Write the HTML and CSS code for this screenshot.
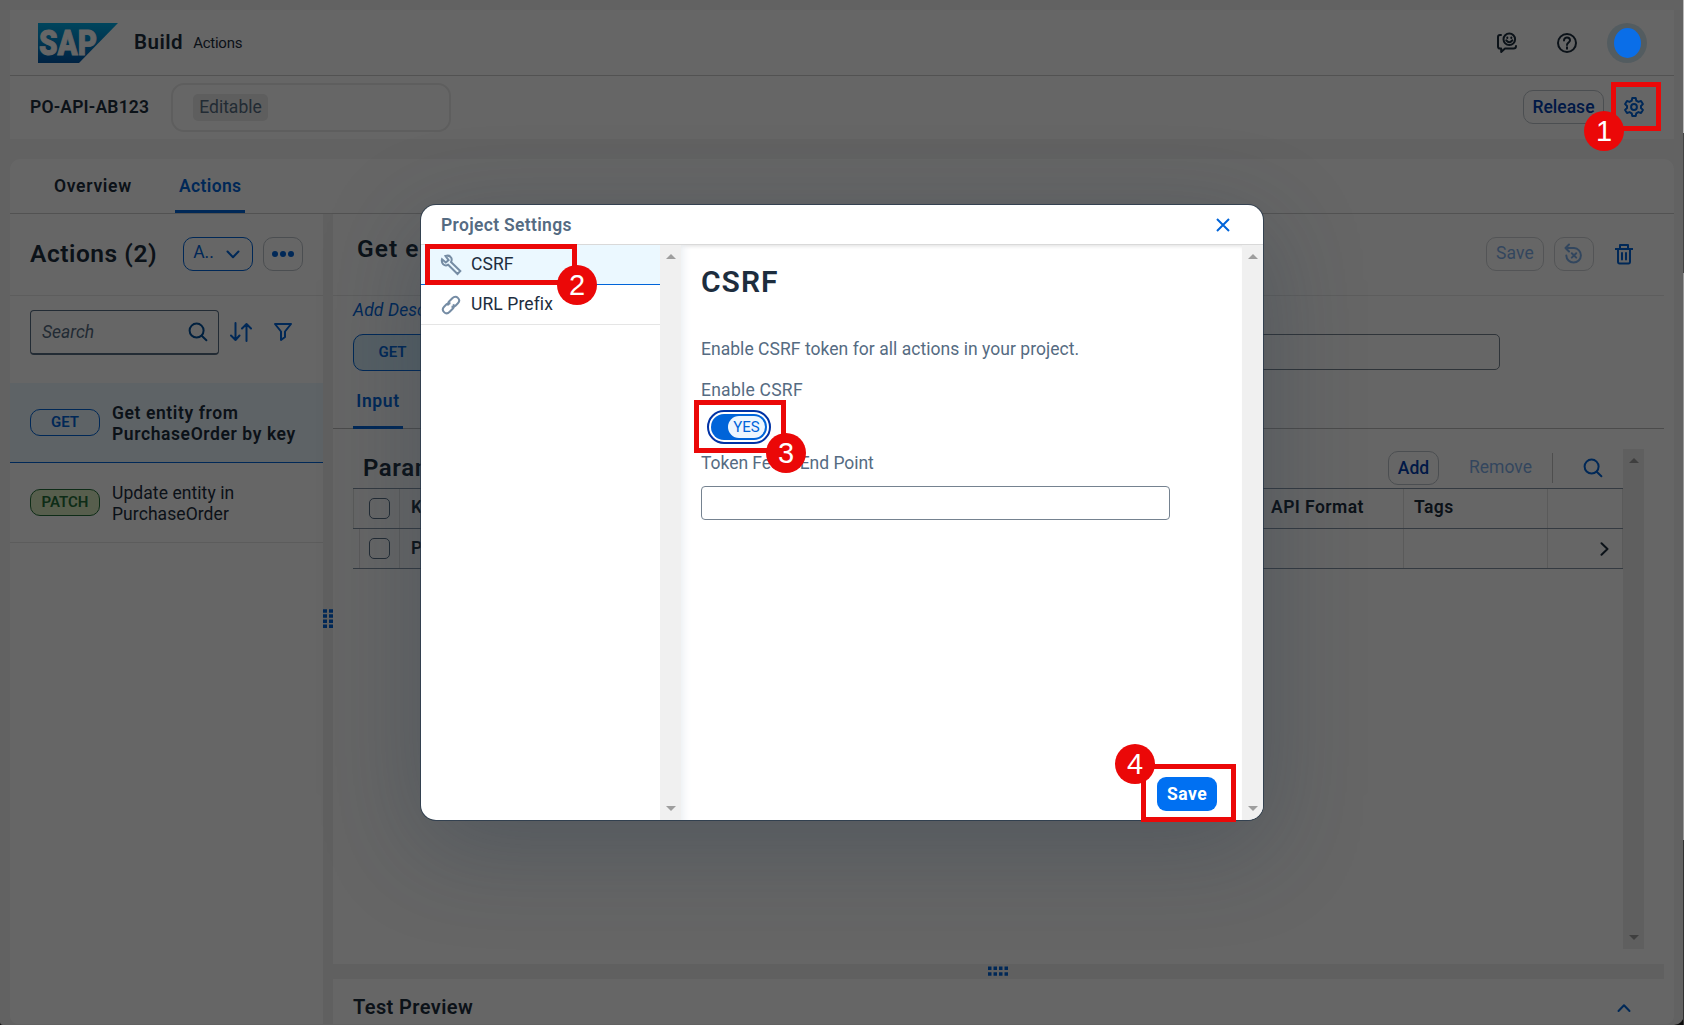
FILE: index.html
```html
<!DOCTYPE html>
<html lang="en">
<head>
<meta charset="utf-8">
<title>SAP Build Actions</title>
<link rel="stylesheet" href="styles.css">
</head>
<body>
<svg width="0" height="0" class="defs">
  <symbol id="search" viewBox="0 0 20 20"><circle cx="8.6" cy="8.6" r="7"/><path d="M13.7 13.7 18.4 18.2"/></symbol>
</svg>
<div class="app">
  <header class="shell">
    <svg class="logo" width="80" height="40" viewBox="0 0 80 40">
      <defs><linearGradient id="g" x1="0" y1="0" x2="0" y2="1"><stop offset="0" stop-color="#00aee8"/><stop offset="1" stop-color="#0057a8"/></linearGradient></defs>
      <path d="M0 0H80L41 40H0Z" fill="url(#g)"/>
      <text x="1" y="32" textLength="58" lengthAdjust="spacingAndGlyphs" class="sap">SAP</text>
    </svg>
    <b class="product">Build</b><span class="sub">Actions</span>
    <div class="shell-tools">
      <svg class="ic dark" width="22" height="22" viewBox="0 0 22 22"><path d="M5 3H4Q2 3 2 5V14.5Q2 16.600 4 16.600H5.200V20L9 16.600H17.500Q20 16.600 20 14"/><circle cx="13.300" cy="7.300" r="5.800"/><path d="M10.300 8.300Q13.300 12 16.300 8.300M11.300 5.500V6M15.300 5.500V6"/></svg>
      <svg class="ic dark" width="22" height="22" viewBox="0 0 22 22"><circle cx="11" cy="11" r="9"/><path d="M8 8.500C8 4.300 14 4.800 14 8.300 14 10.500 11 10.500 11 13M11 15.200V16.800"/></svg>
      <i class="avatar"></i>
    </div>
  </header>
  <div class="projbar">
    <b class="proj">PO-API-AB123</b>
    <div class="status"><span>Editable</span></div>
    <button class="btn release">Release</button>
    <svg class="ic gear" width="22" height="22" viewBox="0 0 22 22"><path d="M9.300 2H12.700L13.300 4.700 15.400 5.900 18 5 19.900 8.100 18 10V12L19.900 13.900 18 17 15.400 16.100 13.300 17.300 12.700 20H9.300L8.700 17.300 6.600 16.100 4 17 2.100 13.900 4 12V10L2.100 8.100 4 5 6.600 5.900 8.700 4.700Z"/><circle cx="11" cy="11" r="2.900"/></svg>
  </div>
  <main class="page">
    <nav class="tabs"><b class="t1">Overview</b><b class="on">Actions</b></nav>
    <div class="cols">
      <section class="left">
        <div class="left-head">
          <h2>Actions (2)</h2>
          <button class="btn pick"><span>A..</span><svg class="ic" width="14" height="9" viewBox="0 0 14 9"><path d="M1.500 1.500 7 7.200 12.500 1.500"/></svg></button>
          <button class="btn more"><i></i><i></i><i></i></button>
        </div>
        <div class="filter">
          <div class="search"><em>Search</em><svg class="ic" width="20" height="20"><use href="#search"/></svg></div>
          <svg class="ic sort" width="22" height="20" viewBox="0 0 22 20"><path d="M5.500 1V18M1 13.500 5.500 18 9.500 13.500M16.500 19V2M12 6.500 16.500 2 21 6.500"/></svg>
          <svg class="ic funnel" width="20" height="20" viewBox="0 0 20 20"><path d="M2 2H18L12 9.500V15L8 18V9.500Z"/></svg>
        </div>
        <div class="item sel"><span class="pill">GET</span><b>Get entity from<br>PurchaseOrder by key</b></div>
        <div class="item"><span class="pill patch">PATCH</span><span class="nm">Update entity in<br>PurchaseOrder</span></div>
      </section>
      <div class="vsplit"><svg width="10" height="20" viewBox="0 0 10 20"><path d="M2 1.200V20M8 1.200V20"/></svg></div>
      <section class="right">
        <div class="detail">
          <div class="d-head">
            <h2>Get entity from PurchaseOrder by key</h2>
            <button class="btn dis">Save</button>
            <button class="btn dis undo"><svg class="ic" width="20" height="22" viewBox="0 0 20 22"><path d="M1.500 5H10A7.300 7.300 0 1 1 2.300 12.500M5 1.500 1.500 5 5 8.500M7.800 10.200 12.200 14.600M12.200 10.200 7.800 14.600"/></svg></button>
            <svg class="ic trash" width="18" height="22" viewBox="0 0 18 22"><path d="M0.500 6H17.500M5 5.500V2H13V5.500M3 6V18.500Q3 20.500 4.500 20.500H13.500Q15 20.500 15 18.500V6M7 10V16.500M11 10V16.500"/></svg>
          </div>
          <em class="adddesc">Add Description</em>
          <div class="url"><span class="verb">GET</span><div class="path"></div></div>
          <nav class="subtabs"><b>Input</b></nav>
          <div class="params">
            <div class="pmain">
              <div class="p-head"><h3>Parameters</h3><button class="btn add">Add</button><span class="remove">Remove</span><svg class="ic" width="20" height="20"><use href="#search"/></svg></div>
              <div class="row hd"><span class="c0"><i class="box"></i></span><b class="c1">Key</b><b class="c2">API Format</b><b class="c3">Tags</b><span class="c4"></span></div>
              <div class="row rw"><span class="c0"><i class="box"></i></span><b class="c1">PurchaseOrder</b><b class="c2"></b><b class="c3"></b><span class="c4"><svg class="ic dark" width="9" height="14" viewBox="0 0 9 14"><path d="M1.500 1.200 7.500 7 1.500 12.800"/></svg></span></div>
            </div>
            <div class="sbar"><i class="up"></i><i class="down"></i></div>
          </div>
        </div>
        <div class="hsplit"><svg width="20" height="10" viewBox="0 0 20 10"><path d="M0 2.200H20M0 8H20"/></svg></div>
        <div class="test"><b>Test Preview</b><svg class="ic" width="14" height="10" viewBox="0 0 14 10"><path d="M1.500 8 7 2.200 12.500 8"/></svg></div>
      </section>
    </div>
  </main>
</div>
<div class="shade"></div>
<i class="disc"></i>
<div class="edge"></div>

<div class="dialog">
  <div class="dh"><b>Project Settings</b><svg width="14" height="14" viewBox="0 0 14 14"><path d="M1 1 13 13M13 1 1 13"/></svg></div>
  <div class="db">
    <ul>
      <li class="cur"><svg width="22" height="22" viewBox="0 0 22 22"><path d="M2 5.200 5.800 8.500 8.600 6.100 5.500 2Q9.600.7 11.300 3.900 12.200 6 11 8L20.300 17 17.500 20 8.200 10.700Q5.500 12.300 3.200 10.300 1.200 8.200 2 5.200Z"/></svg><span>CSRF</span></li>
      <li><svg width="22" height="22" viewBox="0 0 22 22"><path d="M8.500 11.500C7.500 9.500 8 8.500 9.300 7.200L12.300 4.200C14.300 2.200 16.500 2.500 17.900 3.900 19.500 5.500 19.500 7.700 17.900 9.300L15.500 11.700Q13.700 13.300 11.500 12.500M13.300 10.300C14.500 12.300 14 13.500 12.700 14.800L9.700 17.800C7.700 19.800 5.500 19.500 4.100 18.100 2.500 16.500 2.500 14.300 4.100 12.700L6.500 10.300Q8.300 8.700 10.500 9.500"/></svg><span>URL Prefix</span></li>
    </ul>
    <div class="sbar lite"><i class="up"></i><i class="down"></i></div>
    <div class="content">
      <h1>CSRF</h1>
      <p class="desc">Enable CSRF token for all actions in your project.</p>
      <label class="l1">Enable CSRF</label>
      <div class="switch"><div><span>YES</span></div></div>
      <label class="l2">Token Fetch End Point</label>
      <div class="field"></div>
      <button class="save">Save</button>
    </div>
    <div class="sbar lite"><i class="up"></i><i class="down"></i></div>
  </div>
</div>

<div class="mark m1"><span>1</span></div>
<div class="mark m2"><span>2</span></div>
<div class="mark m3"><span>3</span></div>
<div class="mark m4"><span>4</span></div>
</body>
</html>
```
FILE: styles.css
```css
*{box-sizing:border-box}
html{background:#222}
body{margin:0;width:1684px;height:1025px;overflow:hidden;position:relative;font:17.5px/21px Roboto,"Liberation Sans",sans-serif;color:#1d2d3e}
h1,h2,h3,p,ul{margin:0;padding:0}
b,h1,h2,h3{font-weight:600}
button{font:inherit;padding:0;margin:0}
.defs{position:absolute}
.ic{fill:none;stroke:#0064d9;stroke-width:2;stroke-linejoin:round;stroke-linecap:round;flex:none}
.ic.dark{stroke:#1d2d3e}
.app{height:1025px;padding:10px 10px 1px;display:flex;flex-direction:column;background:#f4f4f4;border-radius:0 0 10px 3px}
.shell{height:66px;flex:none;background:#fff;border-bottom:1px solid #ccc;display:flex;align-items:center;padding:0 27px 0 28px}
.sap{font:900 35px Roboto,sans-serif;fill:#fff;stroke:#fff;stroke-width:.9}
.product{font-size:20.5px;margin-left:16px;letter-spacing:.5px}
.sub{font-size:15px;margin-left:10px;letter-spacing:-.25px;padding-top:1px}
.shell-tools{margin-left:auto;display:flex;align-items:center;gap:38px}
.avatar{width:40px;height:40px;border-radius:50%;background:#d0e6f0;margin-left:-9px}
.projbar{height:63px;flex:none;background:#fff;display:flex;align-items:center;padding:0 29px 0 20px}
.proj{width:141px;letter-spacing:.2px}
.status{width:280px;height:49px;border:2px solid #ebebeb;border-radius:13px;padding:9px 20px}
.status span{display:block;width:75px;height:27px;background:#ebebeb;border-radius:5px;color:#556b82;text-align:center;line-height:27px}
.btn{border:1px solid #bcc3ca;border-radius:10px;background:none;color:#0040b0;height:34px;display:flex;align-items:center;justify-content:center;flex:none}
.release{width:81px;margin-left:auto;font-weight:500;margin-top:-1px}
.gear{margin:-2px 0 0 19px}
.page{margin-top:20px;flex:1;min-height:0;background:#fff;border-radius:10px 10px 8px 8px;display:flex;flex-direction:column}
.tabs{height:55px;flex:none;border-bottom:1px solid #ccc;display:flex;padding-left:44px;line-height:54px;letter-spacing:.35px}
.tabs .t1{width:121px;letter-spacing:.7px}
.on{width:70px;padding-left:4px;color:#0064d9;border-bottom:3px solid #0064d9;border-radius:2px 2px 0 0}
.cols{flex:1;display:flex;min-height:0}
.left{width:313px}
.left-head{height:82px;border-bottom:1px solid #e9e9e9;display:flex;align-items:center;padding:0 20px 1px;gap:10px}
h2{font-size:24.5px;letter-spacing:.55px;white-space:nowrap}
.left-head h2{width:143px;padding-bottom:2px}
.pick{width:70px;border-color:#0064d9;gap:12px;color:#0064d9}
.pick span{margin:-3px 0 0 -3px}
.more{width:40px;gap:2px}
.more i{width:6px;height:6px;border-radius:50%;background:#0064d9}
.filter{height:87px;display:flex;padding:14px 20px}
.search{width:189px;height:45px;border:1px solid #556b82;border-bottom-width:2px;border-radius:4px;display:flex;justify-content:space-between;align-items:center;padding:0 10px 0 11px;color:#556b82}
.search .ic{stroke:#00509c}
.sort{margin:12px 21px 0 11px}
.funnel{margin-top:12px}
.item{height:80px;border-bottom:1px solid #e5e5e5;display:flex;align-items:center;gap:12px;padding:0 20px 1px}
.item>:last-child{padding-top:3px}
.sel{background:#ebf8ff;border-color:#0064d9}
.sel b{letter-spacing:.6px;white-space:nowrap}
.nm{letter-spacing:.07px}
.pill{width:70px;height:27px;border:1px solid #0064d9;border-radius:10px;background:#ebf8ff;color:#0064d9;font-size:15px;font-weight:600;text-align:center;line-height:25px}
.patch{background:#d9ecc0;border-color:#256f3a;color:#256f3a}
.vsplit{width:10px;background:#f0f0f0;padding-top:394px}
.vsplit path{stroke:#0064d9;stroke-width:4;stroke-dasharray:3.500 1.600}
.right{width:1331px;display:flex;flex-direction:column}
.detail{height:750px;flex:none}
.d-head{height:82px;border-bottom:1px solid #e9e9e9;display:flex;align-items:center;padding:0 31px 1px 24px}
.d-head h2{flex:1;padding-bottom:11px;letter-spacing:1px}
.dis{width:58px;opacity:.5;color:#0064d9;border-color:#a0a8b0;margin-right:10px;padding-bottom:1px;letter-spacing:.2px}
.d-head .undo{width:40px;margin-right:21px}
.adddesc{display:block;color:#0064d9;padding:4px 0 0 20px;letter-spacing:.1px}
.url{height:37px;margin:13px 0 0 20px;display:flex}
.verb{width:79px;height:37px;border:1px solid #0064d9;border-radius:10px 0 0 10px;background:#d8eefa;color:#0064d9;font-weight:600;font-size:15px;line-height:35px;text-align:center}
.path{width:1068px;height:36px;border:1px solid #758290;border-radius:5px}
.subtabs{height:58px;border-bottom:1px solid #bbb;padding-left:20px;color:#0064d9;display:flex}
.subtabs b{width:50px;height:58px;text-align:center;line-height:60px;border-bottom:3px solid #0064d9;letter-spacing:.6px;border-radius:2px 2px 0 0}
.params{display:flex;margin:20px 0 0 20px}
.pmain{width:1270px}
.p-head{height:39px;display:flex;align-items:center;padding:0 20px 1px 10px}
h3{font-size:24px;flex:1;letter-spacing:.6px}
.add{width:51px;margin-right:30px;font-weight:500}
.remove{color:#0064d9;opacity:.5;width:84px;height:30px;line-height:28px;border-right:1px solid #888;margin-right:30px}
.row{display:flex;height:40px;border-top:1px solid #8292a2;line-height:37px}
.row>*{border-right:1px solid #e0e0e0;height:39px}
.row b{letter-spacing:.45px}
.c0{width:47px;border-left:1px solid #e0e0e0;padding:9px 0 0 15px}
.box{display:block;width:21px;height:21px;border:1px solid #556b82;border-radius:5px}
.c1{width:851px;padding-left:11px}.c2{width:153px;padding-left:20px}.c3{width:144px;padding-left:10px}.c4{width:75px}
.c4 svg{display:block;margin:13px 0 0 52px}
.rw{border-bottom:1px solid #8292a2;height:41px}
.rw .c0{width:41px;margin-left:6px;padding-left:9px}
.rw b{line-height:38px}
.sbar{width:21px;height:500px;background:#eee;display:flex;flex-direction:column;justify-content:space-between;padding:9px 6px}
.up,.down{border:5px solid transparent;border-top:0;border-bottom-color:#9e9e9e}
.down{border:5px solid transparent;border-bottom:0;border-top-color:#9e9e9e}
.hsplit{height:15px;flex:none;background:#f0f0f0;padding-left:655px;line-height:0;padding-top:2px}
.hsplit path{stroke:#0064d9;stroke-width:3.500;stroke-dasharray:3.500 2}
.test{display:flex;justify-content:space-between;align-items:center;height:57px;flex:none;padding:0 33px 0 20px;font-size:20px;letter-spacing:.4px}
.shade{position:absolute;inset:0;background:rgba(0,0,0,.6)}
.disc{position:absolute;left:1614px;top:28px;width:27px;height:30px;border-radius:50%;background:#0a6ee8}
.edge{position:absolute;left:1683px;top:0;width:1px;height:1025px;background:linear-gradient(#bbb 0 133px,#444 133px 273px,#999 273px 840px,#333 840px)}
.dialog{position:absolute;left:421px;top:205px;width:842px;height:615px;background:#fff;border-radius:15px;overflow:hidden;display:flex;flex-direction:column;box-shadow:0 0 0 1px rgba(34,53,72,.7),0 25px 100px rgba(34,53,72,.3)}
.dh{height:40px;flex:none;border-bottom:1px solid #d9d9d9;display:flex;align-items:center;justify-content:space-between;padding:0 33px 0 20px;color:#556b82}
.dh b{padding-top:2px;letter-spacing:.33px}
.dh svg{fill:none;stroke:#0064d9;stroke-width:2}
.db{flex:1;display:flex}
.db ul{width:239px;list-style:none}
.db li{height:40px;border-bottom:1px solid #e5e5e5;display:flex;align-items:center;padding-left:19px;gap:9px;line-height:36px}
.db li span{padding-bottom:1px;letter-spacing:.1px}
.db li svg{fill:none;stroke:#758ca4;stroke-width:2}
.db .cur{background:#ebf8ff;border-color:#0064d9}
.lite{height:auto;background:#f0f0f0;width:21px}
.content{width:561px;padding:0 0 0 20px;box-shadow:inset 12px 0 10px -10px #e9edf1,inset 0 4px 4px -3px #ddd;display:flex;flex-direction:column;color:#556b82}
h1{font-size:30px;line-height:36px;color:#1d2d3e;margin-top:19px;letter-spacing:1px}
.desc{margin-top:39px;letter-spacing:.04px}
.l1{margin-top:20px;letter-spacing:.25px}
.switch{width:64px;height:34px;border:2px solid #0032a5;border-radius:17px;margin:9px 0 0 6px;padding:2px}
.switch div{height:26px;width:56px;background:#0064d9;border-radius:13px;padding:2px 2px 0 17px}
.switch span{display:block;height:22px;background:#edf6ff;border-radius:11px;color:#0064d9;font-size:15px;line-height:22px;text-align:center}
.l2{margin-top:9px;letter-spacing:-.04px}
.field{width:469px;height:34px;border:1px solid #758290;border-radius:4px;margin-top:12px}
.save{width:60px;height:34px;border:0;border-radius:9px;background:#0070f2;color:#fff;font-weight:700;letter-spacing:.5px;margin:auto 25px 9px auto}
.mark{position:absolute;border:5px solid #eb0808}
.mark span{position:absolute;width:40px;height:40px;border-radius:50%;background:#eb0808;color:#fff;font:29px/41px "Liberation Sans",Arial,sans-serif;text-align:center}
.m1{left:1611px;top:82px;width:50px;height:49px}
.m1 span{left:-32px;top:24px}
.m2{left:425px;top:244px;width:152px;height:41px}
.m2 span{left:127px;top:16px}
.m3{left:694px;top:400px;width:92px;height:53px}
.m3 span{left:67px;top:28px}
.m4{left:1141px;top:764px;width:95px;height:58px}
.m4 span{left:-31px;top:-25px}
```
